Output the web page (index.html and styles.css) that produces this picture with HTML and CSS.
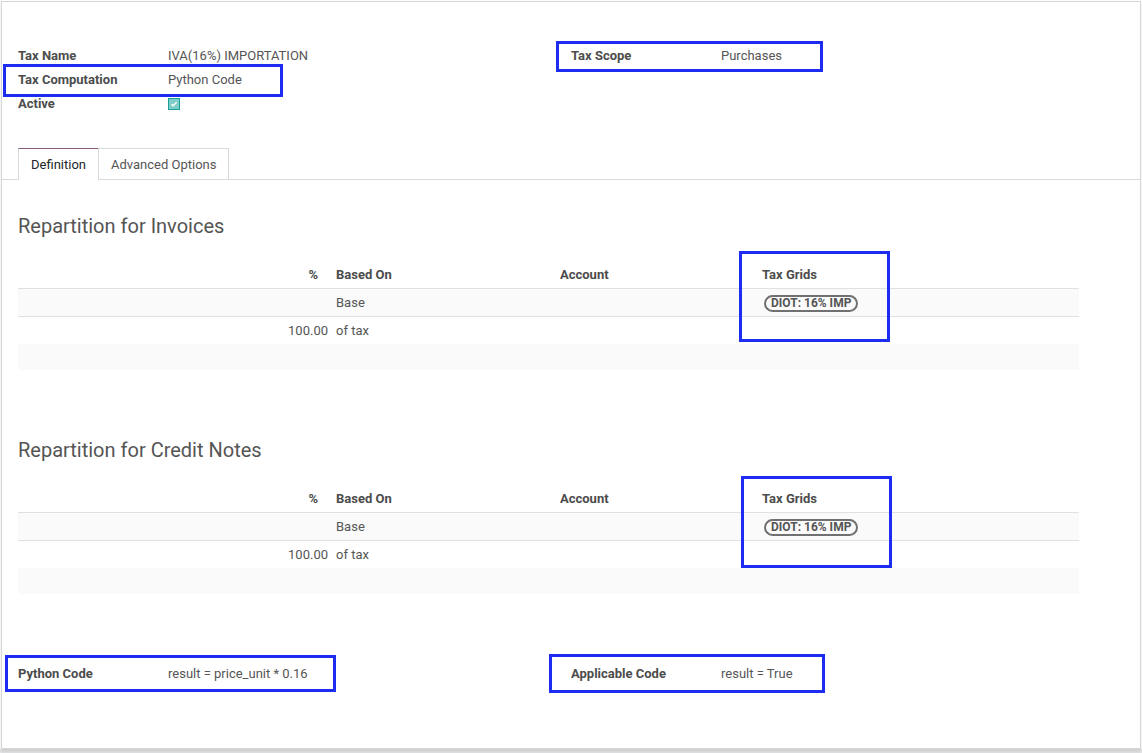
FILE: index.html
```html
<!DOCTYPE html>
<html>
<head>
<meta charset="utf-8">
<link rel="stylesheet" href="styles.css">
</head>
<body>
<div class="sheet">
  <div class="group-row">
    <div class="group">
      <div class="field"><span class="label">Tax Name</span><span class="value">IVA(16%) IMPORTATION</span></div>
      <div class="field"><span class="label">Tax Computation</span><span class="value">Python Code</span></div>
      <div class="field"><span class="label">Active</span><span class="value"><span class="checkbox"><svg width="8" height="8" viewBox="0 0 8 8"><path d="M1.5 4.3 L3.2 5.8 L6.6 2.2" fill="none" stroke="#ffffff" stroke-width="1.4"/></svg></span></span></div>
    </div>
    <div class="group">
      <div class="field"><span class="label">Tax Scope</span><span class="value">Purchases</span></div>
    </div>
  </div>

  <div class="tabs">
    <div class="tab active">Definition</div>
    <div class="tab">Advanced Options</div>
  </div>

  <div class="section first">
    <h2>Repartition for Invoices</h2>
    <table class="list">
      <thead>
        <tr><th class="c1 pct">%</th><th class="c2">Based On</th><th class="c3">Account</th><th class="c4">Tax Grids</th><th class="c5"></th></tr>
      </thead>
      <tbody>
        <tr class="odd"><td class="c1"></td><td>Base</td><td></td><td><span class="badge">DIOT: 16% IMP</span></td><td></td></tr>
        <tr><td class="c1">100.00</td><td>of tax</td><td></td><td></td><td></td></tr>
        <tr class="odd empty"><td colspan="5"></td></tr>
      </tbody>
    </table>
  </div>

  <div class="section">
    <h2>Repartition for Credit Notes</h2>
    <table class="list">
      <thead>
        <tr><th class="c1 pct">%</th><th class="c2">Based On</th><th class="c3">Account</th><th class="c4">Tax Grids</th><th class="c5"></th></tr>
      </thead>
      <tbody>
        <tr class="odd"><td class="c1"></td><td>Base</td><td></td><td><span class="badge">DIOT: 16% IMP</span></td><td></td></tr>
        <tr><td class="c1">100.00</td><td>of tax</td><td></td><td></td><td></td></tr>
        <tr class="odd empty"><td colspan="5"></td></tr>
      </tbody>
    </table>
  </div>

  <div class="group-row bottom">
    <div class="group">
      <div class="field"><span class="label">Python Code</span><span class="value">result = price_unit * 0.16</span></div>
    </div>
    <div class="group">
      <div class="field"><span class="label">Applicable Code</span><span class="value">result = True</span></div>
    </div>
  </div>
</div>

<div class="mark m1"></div>
<div class="mark m2"></div>
<div class="mark m3"></div>
<div class="mark m4"></div>
<div class="mark m5"></div>
<div class="mark m6"></div>
</body>
</html>
```

FILE: styles.css
```css
html, body {
  margin: 0;
  padding: 0;
  background: #ffffff;
}
body {
  font-family: Roboto, "Liberation Sans", sans-serif;
  font-size: 13px;
  color: #4c4c4c;
  position: relative;
  height: 753px;
  overflow: hidden;
  background: linear-gradient(#ffffff 0, #ffffff 749px, #e4e6e8 749px);
}
.sheet {
  margin: 1px 0 0 1px;
  width: 1138px;
  height: 746px;
  border: 1px solid #d4d6d8;
  background: #ffffff;
  box-shadow: 0 3px 3px rgba(0,0,0,0.10);
}
.group-row {
  display: flex;
  padding: 41px 0 0 16px;
}
.group {
  width: 553px;
}
.field {
  display: flex;
  align-items: center;
  height: 24px;
}
.label {
  width: 150px;
  font-weight: bold;
  color: #4c4c4c;
}
.value {
  color: #555;
  display: flex;
  align-items: center;
}
.checkbox {
  width: 10px;
  height: 10px;
  border: 1px solid #1a9f98;
  background: #7fcdc9;
  display: flex;
  align-items: center;
  justify-content: center;
  margin-top: 2px;
}
.tabs {
  display: flex;
  margin-top: 33px;
  padding-left: 16px;
  border-bottom: 1px solid #d8dadd;
  height: 31px;
}
.tab {
  line-height: 31px;
  padding: 0 12px;
  border: 1px solid #d8dadd;
  border-bottom: none;
  color: #555;
  background: #fff;
  box-sizing: border-box;
  height: 31px;
}
.tab.active {
  border-top: 1px solid #875a7b;
  border-right: none;
  color: #212529;
  height: 32px;
  margin-bottom: -1px;
  padding: 0 12px 0 12px;
}
.section {
  padding: 0 61px 0 16px;
}
.section.first h2 { margin-top: 34px; }
h2 {
  margin: 68px 0 0 0;
  font-weight: normal;
  font-size: 20px;
  line-height: 24px;
  color: #555;
}
.list {
  width: 1061px;
  border-collapse: collapse;
  margin-top: 23px;
  table-layout: fixed;
}
.list th {
  height: 27px;
  text-align: left;
  font-weight: bold;
  color: #4c4c4c;
  padding: 0 4px;
  border-bottom: 1px solid #dee2e6;
}
.list td {
  height: 27px;
  padding: 0 4px;
  color: #555;
  border-bottom: 1px solid #dee2e6;
}
.list tr.odd td { background: #fafafa; }
.list tr.empty td { height: 26px; border-bottom: none; }
.list tbody tr:nth-child(2) td { border-bottom: none; }
.c1 { width: 296px; text-align: right !important; }
.pct { padding-right: 14px !important; }
.c2 { width: 216px; }
.c3 { width: 194px; }
.c4 { width: 130px; }
.badge {
  display: inline-block;
  border: 2px solid #707070;
  border-radius: 9px;
  padding: 0 5px;
  font-size: 12px;
  font-weight: bold;
  line-height: 13px;
  color: #555;
  margin-left: 2px;
  position: relative;
  top: 1px;
}
.group-row.bottom {
  padding-top: 67px;
}
.mark {
  position: absolute;
  border: 3px solid #1c2cf0;
  box-sizing: border-box;
}
.m1 { left: 3px; top: 64px; width: 280px; height: 33px; }
.m2 { left: 556px; top: 41px; width: 267px; height: 31px; }
.m3 { left: 739px; top: 251px; width: 151px; height: 91px; }
.m4 { left: 741px; top: 476px; width: 151px; height: 92px; }
.m5 { left: 5px; top: 655px; width: 331px; height: 37px; }
.m6 { left: 549px; top: 654px; width: 276px; height: 39px; }
```
